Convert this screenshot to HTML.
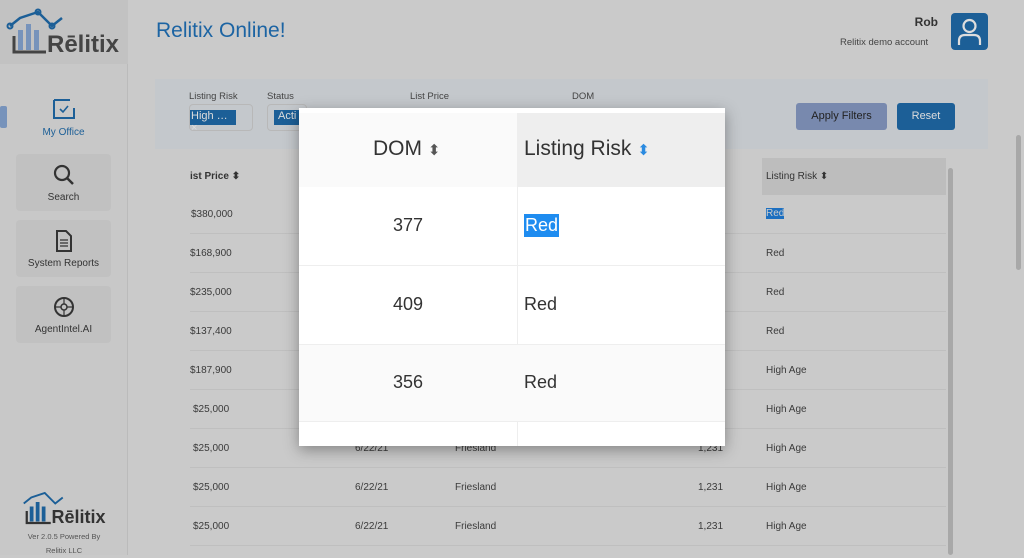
<!DOCTYPE html>
<html><head><style>
*{margin:0;padding:0;box-sizing:border-box}
body{width:1024px;height:555px;overflow:hidden;background:#cacaca;font-family:"Liberation Sans",sans-serif;position:relative;color:#333}
.abs{position:absolute}
.side{left:0;top:0;width:128px;height:555px;background:#c8c8c8;border-right:1px solid #bbb}
.logoarea{left:0;top:0;width:128px;height:64px;background:#c2c2c2}
.nav{left:16px;width:95px;height:57px;background:#c1c1c1;border-radius:4px;text-align:center;font-size:10px;color:#333}
.nav span{position:absolute;left:0;right:0;bottom:8px}
.row{left:190px;width:756px;height:39px;border-bottom:1px solid #bfbfbf;font-size:10px;color:#3a3a3a}
.row div{position:absolute;top:14px}
</style></head><body>
<div class="abs side"></div>
<div class="abs logoarea"></div>
<svg class="abs" style="left:6px;top:8px" width="118" height="48" viewBox="0 0 118 48">
<polyline points="4,18 14,10 32,4 46,18 56,10" fill="none" stroke="#1c5f97" stroke-width="2.5"/>
<circle cx="4" cy="18" r="2.5" fill="none" stroke="#1c5f97" stroke-width="2"/><circle cx="32" cy="4" r="2.5" fill="none" stroke="#1c5f97" stroke-width="2"/><circle cx="46" cy="18" r="2.5" fill="none" stroke="#1c5f97" stroke-width="2"/>
<rect x="12" y="22" width="5" height="20" fill="#7793bb"/><rect x="20" y="16" width="5" height="26" fill="#7793bb"/><rect x="28" y="22" width="5" height="20" fill="#7793bb"/>
<polyline points="8,28 8,44 40,44" fill="none" stroke="#444" stroke-width="3"/>
<text x="41" y="44" font-size="24" font-weight="bold" fill="#444" font-family="Liberation Sans">Rēlitix</text>
</svg>
<div class="abs" style="left:156px;top:19px;font-size:21px;color:#1c64a3">Relitix Online!</div>
<div class="abs" style="left:900px;top:15px;font-size:12px;font-weight:bold;color:#333;width:38px;text-align:right">Rob</div>
<div class="abs" style="left:840px;top:37px;font-size:9.5px;color:#444">Relitix demo account</div>
<div class="abs" style="left:951px;top:13px;width:37px;height:37px;background:#1c5f97;border-radius:4px"></div>
<svg class="abs" style="left:951px;top:13px" width="37" height="37"><circle cx="18.5" cy="13" r="6" fill="none" stroke="#ddd" stroke-width="2.2"/><path d="M8 32 V28 Q8 22 14 22 H23 Q29 22 29 28 V32" fill="none" stroke="#ddd" stroke-width="2.2"/></svg>
<div class="abs" style="left:0;top:106px;width:7px;height:22px;background:#7793bb;border-radius:2px"></div>
<div class="abs nav" style="top:90px;background:#c8c8c8;height:56px"><svg style="margin-top:8px" width="24" height="22"><path d="M2 2 H18 M2 2 V20 H22 V10" fill="none" stroke="#1c5f97" stroke-width="2"/><path d="M8 11 L11 14 L16 8" fill="none" stroke="#1c5f97" stroke-width="1.6"/></svg><span style="color:#1c5f97">My Office</span></div>
<div class="abs nav" style="top:154px"><svg style="margin-top:9px" width="24" height="24"><circle cx="10" cy="10" r="7" fill="none" stroke="#333" stroke-width="2.2"/><path d="M15 15 L21 21" stroke="#333" stroke-width="2.5"/></svg><span>Search</span></div>
<div class="abs nav" style="top:220px"><svg style="margin-top:9px" width="20" height="24"><path d="M3 2 H12 L17 7 V22 H3 Z" fill="none" stroke="#333" stroke-width="2"/><path d="M6 11 H14 M6 14 H14 M6 17 H14" stroke="#333" stroke-width="1.3"/></svg><span>System Reports</span></div>
<div class="abs nav" style="top:286px"><svg style="margin-top:9px" width="24" height="24"><circle cx="12" cy="12" r="9" fill="none" stroke="#333" stroke-width="2"/><circle cx="12" cy="12" r="3" fill="none" stroke="#333" stroke-width="1.5"/><path d="M12 3 V9 M3 12 H9 M15 12 H21 M12 15 V21" stroke="#333" stroke-width="1.2"/></svg><span>AgentIntel.AI</span></div>
<svg class="abs" style="left:20px;top:490px" width="90" height="36" viewBox="0 0 118 48">
<polyline points="4,18 14,10 32,4 46,18 56,10" fill="none" stroke="#1c5f97" stroke-width="2.5"/>
<rect x="12" y="22" width="5" height="20" fill="#1c5f97"/><rect x="20" y="16" width="5" height="26" fill="#1c5f97"/><rect x="28" y="22" width="5" height="20" fill="#1c5f97"/>
<polyline points="8,28 8,44 40,44" fill="none" stroke="#333" stroke-width="3"/>
<text x="41" y="44" font-size="24" font-weight="bold" fill="#333" font-family="Liberation Sans">Rēlitix</text>
</svg>
<div class="abs" style="left:0;width:128px;top:530px;text-align:center;font-size:7.5px;color:#555;line-height:14px">Ver 2.0.5 Powered By<br>Relitix LLC</div>
<div class="abs" style="left:155px;top:64px;width:833px;height:491px;background:#cacaca"></div>
<div class="abs" style="left:155px;top:79px;width:833px;height:70px;background:#c4c8cc"></div>
<div class="abs" style="left:189px;top:91px;font-size:9.5px;color:#444">Listing Risk</div>
<div class="abs" style="left:267px;top:91px;font-size:9.5px;color:#444">Status</div>
<div class="abs" style="left:410px;top:91px;font-size:9.5px;color:#444">List Price</div>
<div class="abs" style="left:572px;top:91px;font-size:9.5px;color:#444">DOM</div>
<div class="abs" style="left:189px;top:104px;width:64px;height:27px;border:1px solid #b8b8b8;border-radius:4px"></div>
<div class="abs" style="left:190px;top:110px;width:46px;height:15px;background:#1c5f97;color:#ddd;font-size:11px;padding-left:1px">High … ×</div>
<div class="abs" style="left:267px;top:104px;width:40px;height:27px;border:1px solid #b8b8b8;border-radius:4px"></div>
<div class="abs" style="left:274px;top:110px;width:30px;height:15px;background:#1c5f97;color:#ddd;font-size:11px;padding-left:4px">Acti</div>
<div class="abs" style="left:796px;top:103px;width:91px;height:27px;background:#7889ae;border-radius:3px;font-size:11px;text-align:center;line-height:27px;color:#222">Apply Filters</div>
<div class="abs" style="left:897px;top:103px;width:58px;height:27px;background:#1c5f97;border-radius:3px;font-size:11px;text-align:center;line-height:27px;color:#ddd">Reset</div>
<div class="abs" style="left:762px;top:158px;width:184px;height:37px;background:#bdbdbd"></div>
<div class="abs" style="left:190px;top:171px;font-size:10px;font-weight:bold;color:#333">ist Price ⬍</div>
<div class="abs" style="left:766px;top:171px;font-size:10px;color:#333">Listing Risk ⬍</div>
<div class="abs" style="left:948px;top:168px;width:5px;height:387px;background:#a8a8a8;border-radius:3px"></div>
<div class="abs" style="left:1016px;top:135px;width:5px;height:135px;background:#a8a8a8;border-radius:3px"></div>
<div class="abs row" style="top:195px"><div style="left:1px">$380,000</div><div style="left:576px;background:#1c6fc0;color:#ccc;top:13px">Red</div></div>
<div class="abs row" style="top:234px"><div>$168,900</div><div style="left:576px">Red</div></div>
<div class="abs row" style="top:273px"><div>$235,000</div><div style="left:576px">Red</div></div>
<div class="abs row" style="top:312px"><div>$137,400</div><div style="left:576px">Red</div></div>
<div class="abs row" style="top:351px"><div>$187,900</div><div style="left:576px">High Age</div></div>
<div class="abs row" style="top:390px"><div style="left:3px">$25,000</div><div style="left:576px">High Age</div></div>
<div class="abs row" style="top:429px"><div style="left:3px">$25,000</div><div style="left:165px">6/22/21</div><div style="left:265px">Friesland</div><div style="left:508px">1,231</div><div style="left:576px">High Age</div></div>
<div class="abs row" style="top:468px"><div style="left:3px">$25,000</div><div style="left:165px">6/22/21</div><div style="left:265px">Friesland</div><div style="left:508px">1,231</div><div style="left:576px">High Age</div></div>
<div class="abs row" style="top:507px"><div style="left:3px">$25,000</div><div style="left:165px">6/22/21</div><div style="left:265px">Friesland</div><div style="left:508px">1,231</div><div style="left:576px">High Age</div></div>
<div class="abs" style="left:299px;top:108px;width:426px;height:338px;background:#fff;box-shadow:0 4px 14px rgba(0,0,0,.35)">
 <div class="abs" style="left:0;top:5px;width:218px;height:74px;background:#fafafa"></div>
 <div class="abs" style="left:218px;top:5px;width:208px;height:74px;background:#eeeeee"></div>
 <div class="abs" style="left:218px;top:5px;width:1px;height:333px;background:#eee"></div>
 <div class="abs" style="left:74px;top:29px;font-size:21px;color:#333">DOM <span style="font-size:15px;color:#555">⬍</span></div>
 <div class="abs" style="left:225px;top:29px;font-size:21px;color:#333">Listing Risk <span style="font-size:15px;color:#2a8ae0">⬍</span></div>
 <div class="abs" style="left:0;top:157px;width:426px;height:1px;background:#eee"></div>
 <div class="abs" style="left:0;top:236px;width:426px;height:78px;background:#fafafa;border-top:1px solid #eee;border-bottom:1px solid #eee"></div>
 <div class="abs" style="left:0;top:107px;width:218px;text-align:center;font-size:18px;color:#333">377</div>
 <div class="abs" style="left:225px;top:106px;font-size:18px;color:#fff;background:#1e8cf0;padding:1px 1px">Red</div>
 <div class="abs" style="left:0;top:186px;width:218px;text-align:center;font-size:18px;color:#333">409</div>
 <div class="abs" style="left:225px;top:186px;font-size:18px;color:#333">Red</div>
 <div class="abs" style="left:0;top:264px;width:218px;text-align:center;font-size:18px;color:#333">356</div>
 <div class="abs" style="left:225px;top:264px;font-size:18px;color:#333">Red</div>
</div>
</body></html>
